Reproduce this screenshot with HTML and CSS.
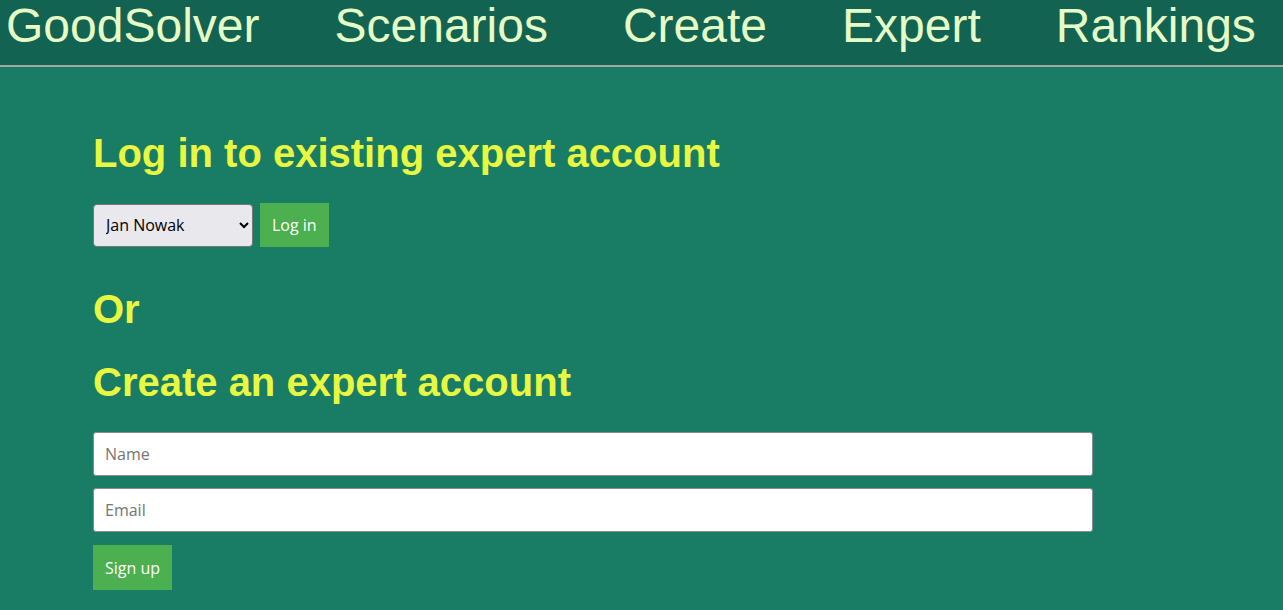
FILE: index.html
```html
<!DOCTYPE html>
<html lang="en">
<head>
<meta charset="utf-8">
<title>GoodSolver - Expert</title>
<link rel="stylesheet" href="styles.css">
</head>
<body>
<nav class="topnav">
  <a class="nav-link" href="#">GoodSolver</a>
  <a class="nav-link" href="#">Scenarios</a>
  <a class="nav-link" href="#">Create</a>
  <a class="nav-link" href="#">Expert</a>
  <a class="nav-link" href="#">Rankings</a>
</nav>
<main class="content">
  <h2 class="heading heading-first">Log in to existing expert account</h2>
  <form class="login-row">
    <select class="expert-select">
      <option>Jan Nowak</option>
    </select>
    <button type="button" class="btn">Log in</button>
  </form>
  <h2 class="heading heading-or">Or</h2>
  <h2 class="heading heading-create">Create an expert account</h2>
  <form class="signup">
    <input class="text-input" type="text" placeholder="Name">
    <input class="text-input" type="email" placeholder="Email">
    <button type="button" class="btn btn-signup">Sign up</button>
  </form>
</main>
</body>
</html>
```
FILE: styles.css
```css
* { box-sizing: border-box; }
html, body {
  margin: 0;
  padding: 0;
  background: #197c65;
  font-family: "Liberation Sans", Arial, sans-serif;
  min-height: 100%;
}
.topnav {
  display: flex;
  gap: 75px;
  height: 67px;
  padding-left: 6px;
  background: #136352;
  border-bottom: 2px solid #a5a89c;
}
.nav-link {
  color: #e6fcc6;
  text-decoration: none;
  font-size: 48px;
  line-height: 52px;
}
.content {
  padding-left: 93px;
}
.heading {
  margin: 0;
  font-size: 40px;
  line-height: 46px;
  font-weight: bold;
  color: #e8f740;
}
.heading-first { padding-top: 63px; margin-bottom: 27px; }
.heading-or { margin-top: 39px; }
.heading-create { margin-top: 27px; margin-bottom: 27px; }
.login-row {
  display: flex;
  gap: 7px;
  align-items: center;
}
.expert-select {
  width: 160px;
  height: 43px;
  padding: 0 8px 0 8px;
  border: 1px solid #767676;
  border-radius: 4px;
  background: #e9e8ed;
  color: #000;
  font-family: "Open Sans", "Noto Sans", sans-serif;
  font-size: 16px;
}
.btn {
  height: 44px;
  padding: 0 12px;
  border: none;
  background: #4caf50;
  color: #fff;
  font-family: "Open Sans", "Noto Sans", sans-serif;
  font-size: 16px;
  cursor: pointer;
}
.signup {
  display: flex;
  flex-direction: column;
  align-items: flex-start;
  gap: 12px;
}
.btn-signup { margin-top: 1px; height: 45px; }
.text-input {
  width: 1000px;
  height: 44px;
  padding: 0 11px;
  border: 1px solid #8b8b96;
  border-radius: 3px;
  background: #fff;
  font-family: "Open Sans", "Noto Sans", sans-serif;
  font-size: 16px;
}
.text-input::placeholder { color: #757575; }
```
